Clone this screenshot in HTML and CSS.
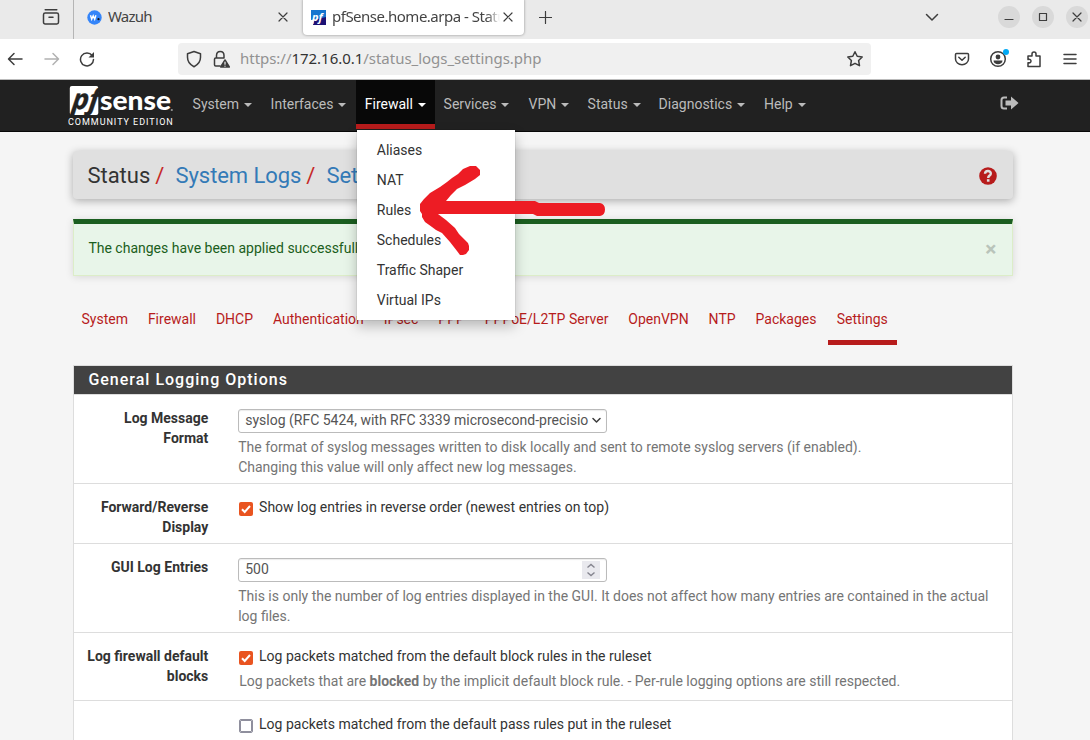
FILE: index.html
```html
<!DOCTYPE html>
<html lang="en">
<head>
<meta charset="utf-8">
<title>pfSense.home.arpa - Status: System Logs: Settings</title>
<link rel="stylesheet" href="styles.css">
</head>
<body>
<div class="tabstrip">
  <div class="strip-start"><svg class="ic" width="18" height="18" viewBox="0 0 18 18"><path d="M3.2 1.7h11.6M3.2 5h11.6q1.7 0 1.7 1.7v7.6q0 1.7-1.7 1.7H3.200q-1.7 0-1.7-1.7V6.700Q1.500 5 3.200 5zM7 9.200h4"/></svg></div>
  <div class="tab">
    <svg width="15" height="15" viewBox="0 0 15 15"><circle cx="7.500" cy="7.500" r="7.200" fill="#3585f9"/><path d="M3.500 5.300l1.200 4 1.500-3.500 1.500 3.500 1.200-4" fill="none" stroke="#fff" stroke-width="1.400"/><circle cx="11.500" cy="9.200" r="1.100" fill="#111"/></svg>
    <span class="tab-name wazuh">Wazuh</span>
    <svg class="ic thin close" width="10" height="10" viewBox="0 0 10 10"><path d="M1 1l8 8M9 1L1 9"/></svg>
  </div>
  <div class="tab current">
    <svg width="15" height="15" viewBox="0 0 15 15"><path fill="#1475cf" d="M0 0h15v8L0 10z"/><path fill="#1c1275" d="M2 15h13V7L3 10z"/><text class="favicon-text" x="1" y="10.500">pf</text></svg>
    <span class="tab-name pf">pfSense.home.arpa - Status</span>
    <svg class="ic thin close" width="10" height="10" viewBox="0 0 10 10"><path d="M1 1l8 8M9 1L1 9"/></svg>
  </div>
  <svg class="ic thin plus" width="13" height="13" viewBox="0 0 13 13"><path d="M6.500 .5v12M.5 6.500h12"/></svg>
  <svg class="ic chevron" width="14" height="9" viewBox="0 0 14 9"><path d="M1.500 1.500L7 7l5.500-5.500"/></svg>
  <div class="win"><svg class="ic thin" width="10" height="10" viewBox="0 0 10 10"><path d="M1 7.500h8"/></svg></div>
  <div class="win"><svg class="ic thin" width="10" height="10" viewBox="0 0 10 10"><path d="M1.500 1.500h7v7h-7z"/></svg></div>
  <div class="win"><svg class="ic thin" width="10" height="10" viewBox="0 0 10 10"><path d="M1 1l8 8M9 1L1 9"/></svg></div>
</div>
<div class="toolbar">
  <svg class="ic back" width="16" height="14" viewBox="0 0 16 14"><path d="M15 7H2M7 1.500L1.500 7 7 12.500"/></svg>
  <svg class="ic forward" width="16" height="14" viewBox="0 0 16 14"><path d="M1 7h13M9 1.500L14.500 7 9 12.500"/></svg>
  <svg class="ic reload" width="16" height="16" viewBox="0 0 16 16"><path d="M13.200 4.500A6.500 6.500 0 1 0 14.500 8.500"/><path d="M15 1v5.500H9.500z" fill="#3d3d3d" stroke="none"/></svg>
  <div class="urlbar">
    <svg class="ic" width="16" height="18" viewBox="0 0 16 18"><path d="M8 1.500l6.500 2.300v3.500c0 4-2.500 7.500-6.500 9.400C4 14.800 1.500 11.300 1.500 7.300V3.800z"/></svg>
    <svg class="ic lock" width="17" height="18" viewBox="0 0 17 18"><path d="M3.500 8V5.500C3.500 0 11 0 11 5.500V8M7 16H2.700Q1.500 16 1.500 14.800V9.200Q1.500 8 2.700 8H10"/><path d="M12 10l4.300 7H7.700z" fill="#3d3d3d"/><path d="M12 12v2.200M12 16v.2" stroke="#f0f0f0" stroke-width="1.200"/></svg>
    <span class="url">https://<b>172.16.0.1</b>/status_logs_settings.php</span>
    <svg class="ic star" width="18" height="18" viewBox="0 0 18 18"><path d="M9 1.700l2.200 4.600 5 .7-3.600 3.500.9 5.200L9 13.300l-4.500 2.400.9-5.200L1.800 7l5-.7z"/></svg>
  </div>
  <svg class="ic pocket" width="16" height="14" viewBox="0 0 16 14"><path d="M2.500 1.500h11q1 0 1 1V7a6.500 5.700 0 0 1-13 0V2.500q0-1 1-1zM4.800 5.200L8 8.200l3.200-3"/></svg>
  <svg class="ic account" width="20" height="20" viewBox="0 0 20 20"><circle cx="9" cy="11" r="7.300"/><circle cx="9" cy="9" r="2.400" fill="#3d3d3d" stroke="none"/><path d="M4.500 12.500h9c0 5-9 5-9 0z" fill="#3d3d3d" stroke="none"/><circle cx="17" cy="4" r="3" fill="#00a9f5" stroke="none"/></svg>
  <svg class="ic puzzle" width="16" height="18" viewBox="0 0 16 18"><path d="M2 6h4V4a2 2 0 0 1 4 0v2h4v10.500H2v-3.800c4 1.200 4-4.400 0-3.200z"/></svg>
  <svg class="ic menu" width="14" height="12" viewBox="0 0 14 12"><path d="M1 1.500h12M1 6h12M1 10.500h12"/></svg>
</div>

<nav class="navbar">
  <div class="brand">
    <svg width="108" height="30" viewBox="0 0 108 30">
      <rect x="2.800" y="0" width="28.500" height="29" rx="2" fill="#fff"/>
      <text class="logo-pf" transform="translate(4.500 23) skewX(-7)" textLength="27" lengthAdjust="spacingAndGlyphs">pf</text>
      <text class="logo-sense" x="33" y="24" textLength="71" lengthAdjust="spacingAndGlyphs">sense</text>
      <circle cx="104.800" cy="24" r="1.100" fill="#999"/>
    </svg>
    <span class="edition">COMMUNITY EDITION</span>
  </div>
  <div class="menu-list">
    <a>System<i></i></a><a>Interfaces<i></i></a>
    <div class="active"><a>Firewall<i></i></a>
      <div class="dropdown"><a>Aliases</a><a>NAT</a><a>Rules</a><a>Schedules</a><a>Traffic Shaper</a><a>Virtual IPs</a></div>
    </div>
    <a>Services<i></i></a><a>VPN<i></i></a><a>Status<i></i></a><a>Diagnostics<i></i></a><a>Help<i></i></a>
  </div>
  <svg class="signout" width="19" height="14" viewBox="0 0 19 14"><path d="M7 1.500H4Q1.500 1.500 1.500 4v6q0 2.500 2.500 2.500h3" fill="none" stroke="#bbb" stroke-width="2"/><path d="M5.500 4.500H11V.5L18.500 7 11 13.500v-4H5.500z" fill="#bbb"/></svg>
</nav>

<main class="container">
  <header class="page-head">
    <span>Status</span><em>/</em><a>System Logs</a><em>/</em><a>Settings</a>
    <svg width="18" height="18" viewBox="0 0 18 18"><circle cx="9" cy="9" r="8.800" fill="#b71c1c"/><path d="M6 6.700C6.200 3 12 3.300 11.800 6.700 11.700 8.700 9.200 8.500 9.200 11" fill="none" stroke="#e0e0e0" stroke-width="2.400"/><rect x="7.900" y="12.200" width="2.600" height="2.500" fill="#e0e0e0"/></svg>
  </header>
  <div class="alert"><span>The changes have been applied successfully.</span><b>×</b></div>
  <div class="tabs">
    <a>System</a><a>Firewall</a><a>DHCP</a><a>Authentication</a><a>IPsec</a><a>PPP</a><a>PPPoE/L2TP Server</a><a>OpenVPN</a><a>NTP</a><a>Packages</a><a class="on">Settings</a>
  </div>
  <section class="panel">
    <h2>General Logging Options</h2>
    <div class="row r1"><label>Log Message<br>Format</label>
      <div><div class="control"><span class="value">syslog (RFC 5424, with RFC 3339 microsecond-precisio</span><svg class="ic" width="9" height="7" viewBox="0 0 9 7"><path d="M1 1.500l3.500 3.500L8 1.500"/></svg></div>
      <p class="help">The format of syslog messages written to disk locally and sent to remote syslog servers (if enabled).<br>Changing this value will only affect new log messages.</p></div></div>
    <div class="row r2"><label>Forward/Reverse<br>Display</label>
      <div class="check"><span class="box checked"><svg width="14" height="14" viewBox="0 0 14 14"><path d="M3 7.200l2.700 2.800L11 4" /></svg></span><span>Show log entries in reverse order (newest entries on top)</span></div></div>
    <div class="row r3"><label>GUI Log Entries</label>
      <div><div class="control"><span>500</span><span class="spin"><svg width="10" height="14" viewBox="0 0 10 14"><path d="M1.500 4.500L5 1.500l3.500 3M1.500 9.500l3.500 3 3.500-3"/></svg></span></div>
      <p class="help">This is only the number of log entries displayed in the GUI. It does not affect how many entries are contained in the actual<br>log files.</p></div></div>
    <div class="row r4"><label>Log firewall default<br>blocks</label>
      <div><div class="check"><span class="box checked"><svg width="14" height="14" viewBox="0 0 14 14"><path d="M3 7.200l2.700 2.800L11 4" /></svg></span><span>Log packets matched from the default block rules in the ruleset</span></div>
      <p class="help inset">Log packets that are <b>blocked</b> by the implicit default block rule. - Per-rule logging options are still respected.</p></div></div>
    <div class="row r5"><label></label><div class="check"><span class="box"></span><span>Log packets matched from the default pass rules put in the ruleset</span></div></div>
  </section>
</main>
<svg class="arrow" width="190" height="94" viewBox="417 163 190 94"><path d="M470 166H476L480 170V175L475 179L465 185L457 189L451 195L446 201H535L539 203H600Q605 204 605 209.500T600 216H537L533 214H438L446 220L455 228L459 234L468 243L469 246V250L466 254L463 255H460L457 251L450 242L442 233L436 230L432 227L425 222L422 217V214L420 211V204L424 199L430 193L440 187L447 182L452 178L458 174L463 169Z"/></svg>
</body>
</html>
```

FILE: styles.css
```css
* { box-sizing: border-box; }
body { margin: 0; width: 1090px; height: 740px; overflow: hidden; background: #f5f5f5; font: 14px/20px Roboto, sans-serif; color: #333; }
svg { display: block; flex: none; }
.ic { fill: none; stroke: #3d3d3d; stroke-width: 1.5; stroke-linejoin: round; stroke-linecap: round; }
.thin { stroke-width: 1.2; }

.tabstrip { display: flex; align-items: center; height: 39px; padding-bottom: 5px; background: #eaeaea; font: 15px/20px "Noto Sans", sans-serif; color: #444; }
.strip-start { display: flex; align-items: center; width: 74px; height: 39px; margin-bottom: -5px; padding: 0 0 5px 42px; border-right: 1px solid #b5b5b5; }
.tab { display: flex; align-items: center; width: 229px; height: 35px; padding: 0 15px 0 13px; }
.tab-name { margin: -2px 0 0 6px; white-space: nowrap; overflow: hidden; }
.wazuh { letter-spacing: -.8px; padding-right: 2px; }
.tab .close { margin-left: auto; }
.current { width: 221px; height: 36px; margin-top: 0; padding: 0 11px 0 8px; background: #fff; border-radius: 0 0 4px 4px; box-shadow: 0 0 3px rgba(0,0,0,.4); }
.pf { width: 168px; letter-spacing: -.5px; mask-image: linear-gradient(90deg, #000 92%, transparent); }
.favicon-text { font: italic bold 11px "Open Sans", sans-serif; fill: #fff; }
.plus { margin-left: 15px; }
.chevron { margin-left: auto; margin-right: 59px; }
.win { display: flex; align-items: center; justify-content: center; width: 22px; height: 22px; margin-right: 12px; border-radius: 50%; background: #d9d9d9; }
.win:last-child { margin-right: 2px; }

.toolbar { display: flex; align-items: center; height: 41px; padding: 0 13px 1px 7px; background: #fff; border-bottom: 1px solid #bbb; }
.forward { margin-left: 21px; opacity: .4; }
.reload { margin-left: 19px; }
.urlbar { display: flex; align-items: center; width: 693px; height: 32px; margin-left: 83px; padding: 0 7px 0 8px; border-radius: 4px; background: #f0f0f0; }
.lock { margin-left: 11px; }
.url { margin: -2px 0 0 10px; font: 15px/20px "Noto Sans", sans-serif; color: #929292; letter-spacing: -.03px; }
.url b { font-weight: 400; color: #333; }
.star { margin-left: auto; }
.pocket { margin-left: 83px; }
.account { margin-left: 19px; margin-top: -2px; }
.puzzle { margin-left: 17px; }
.menu { margin-left: auto; }

.navbar { display: flex; height: 52px; padding-left: 67px; background: #212121; border-bottom: 1px solid #080808; }
.brand { width: 117px; padding-top: 6px; }
.logo-pf { font: italic 700 28px "Open Sans", sans-serif; fill: #212121; stroke: #212121; stroke-width: .4; }
.logo-sense { font: 900 27px Lato, sans-serif; fill: #fff; }
.edition { display: block; padding-left: 1px; font-size: 9px; line-height: 12px; letter-spacing: .97px; color: #fff; white-space: nowrap; }
.menu-list { display: grid; grid-template-columns: 78px 94px 79px 85px 59px 71px 106px 60px; grid-template-rows: 49px; height: 49px; line-height: 48px; color: #bbb; }
.menu-list > a { padding-left: 8.6px; }
.menu-list > a:last-child { padding-left: 8px; }
.menu-list i { display: inline-block; margin-left: 5px; vertical-align: middle; border: 4px solid transparent; border-top-color: currentColor; border-bottom: 0; }
.active { position: relative; padding-left: 8.8px; background: #080808; border-bottom: 5px solid #b71c1c; color: #fff; }
.dropdown { position: absolute; z-index: 2; left: 1px; top: 50px; width: 158px; height: 190px; padding: 5px 0 5px 19.8px; background: #fff; color: #333; box-shadow: 0 6px 12px rgba(0,0,0,.25), 0 0 1px rgba(0,0,0,.3); }
.dropdown a { display: block; line-height: 30px; }
.signout { margin: 16px 0 0 184px; }

.container { width: 940px; margin: 19px 0 0 73px; }
.page-head { display: flex; align-items: center; height: 48px; padding: 1px 16px 0 14.4px; border-radius: 4px; background: #e0e0e0; box-shadow: 0 2px 8px rgba(0,0,0,.3); font-size: 22px; line-height: 48px; }
.page-head em { font-style: normal; color: #c62828; margin: 0 11.2px 0 5px; }
.page-head a { color: #337ab7; letter-spacing: -.08px; }
.page-head svg { margin: 1px 0 0 auto; }
.alert { display: flex; justify-content: space-between; height: 57px; margin-top: 20px; padding: 14px 15.500px 0 14.4px; background: #e8f5e9; border: 1px solid #dcedc8; border-top: 5px solid #1b5e20; color: #1b5e20; box-shadow: 0 1px 8px rgba(0,0,0,.12); }
.alert b { font-size: 21px; line-height: 22px; color: #b9c4ba; }
.tabs { display: flex; height: 52px; margin-top: 17px; color: #b71c1c; white-space: nowrap; }
.tabs a { padding: 16px 8.5px 0; margin-right: 2.93px; }
.tabs .on { padding: 16px 9px 0 8.8px; border-bottom: 5px solid #b71c1c; margin-right: 0; }
.panel { margin-top: 20px; border: 1px solid #ddd; background: #fff; height: 390px; }
.panel h2 { height: 29px; margin: 0; padding-left: 14.4px; border-bottom: 1px solid #ddd; background: #424242; color: #fff; font: 500 16px/28px Roboto, sans-serif; letter-spacing: 1px; }
.row { display: flex; padding-top: 13px; border-bottom: 1px solid #ddd; }
.row label { width: 134.300px; margin-right: 29.700px; text-align: right; font-weight: 700; white-space: nowrap; }
.r1 { height: 89px; }
.r2 { height: 60px; }
.r3 { height: 89px; }
.r4 { height: 68px; }
.r5 { border-bottom: 0; }
.control { display: flex; align-items: center; justify-content: space-between; width: 369px; height: 24px; margin-top: 1px; padding: 0 5px 1px 6.200px; border: 1px solid #bbb; border-radius: 3px; box-shadow: inset 0 1px 1px rgba(0,0,0,.08); color: #555; white-space: nowrap; }
.control > span:first-child { margin-top: -1px; }
.spin { display: flex; align-items: center; justify-content: center; width: 18px; height: 18px; background: #e9e9ee; margin: 1px 1px 0 0; }
.spin path { fill: none; stroke: #85858f; stroke-width: 1.4; }
.help { margin: 4px 0 0 .2px; color: #757575; white-space: nowrap; }
.help.inset { margin: 5px 0 0 1.200px; }
.check { display: flex; white-space: nowrap; }
.box { width: 14px; height: 14px; margin: 5px 6.100px 0 1px; border: 1px solid #8f8f9d; outline: 1px solid #8f8f9d; outline-offset: -2px; border-radius: 2px; }
.box.checked { border: 0; outline: 0; background: #e95420; }
.box path { fill: none; stroke: #fff; stroke-width: 2; }
.arrow { position: absolute; z-index: 3; left: 417px; top: 163px; fill: #ed1c24; }
```
